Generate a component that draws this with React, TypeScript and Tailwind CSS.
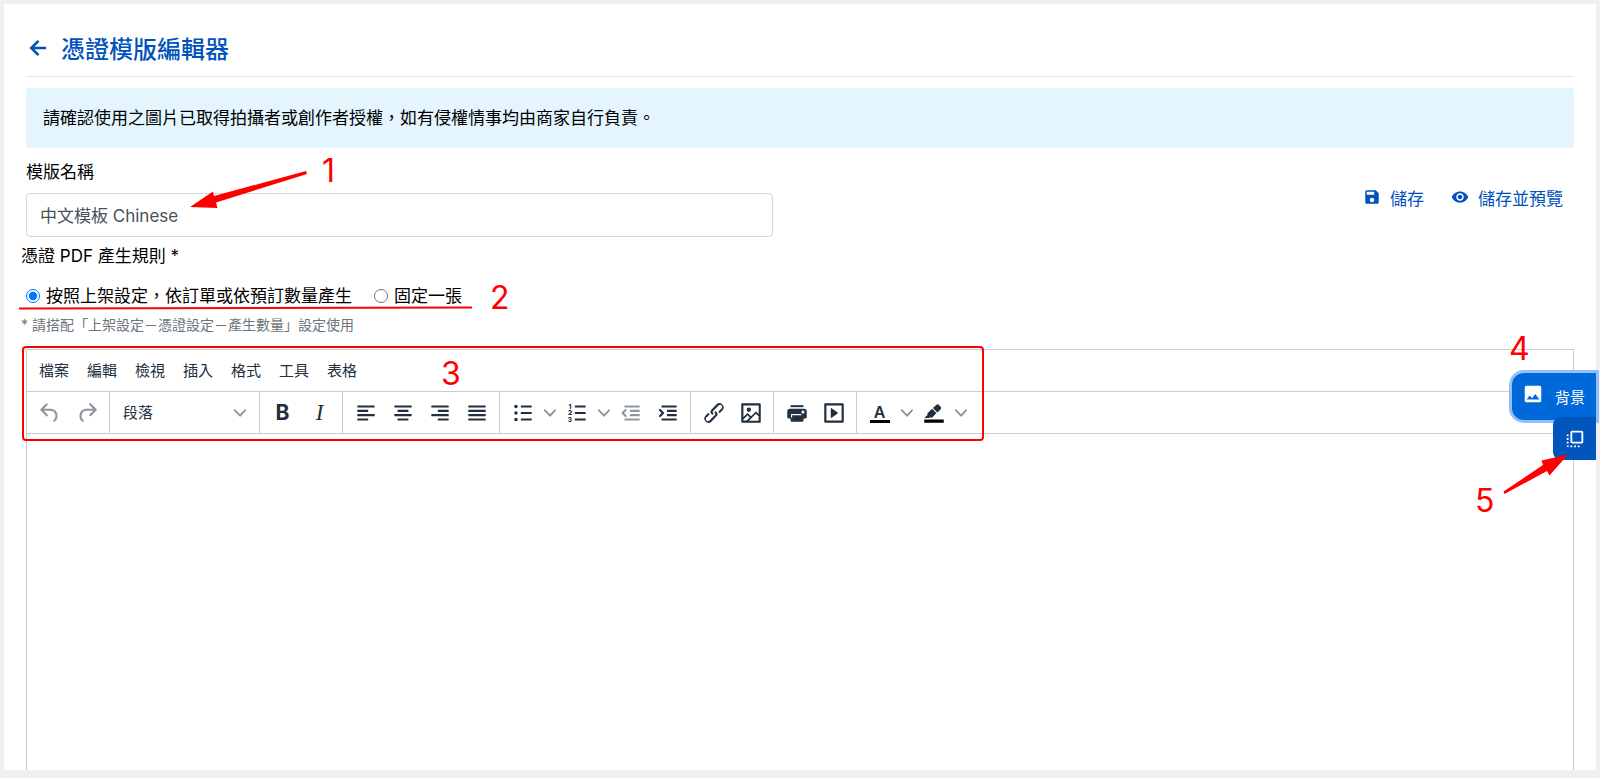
import { useState } from "react";
import type { ReactNode } from "react";
import { MdFlipToFront, MdImage, MdRemoveRedEye, MdSave } from "react-icons/md";

const MENUS = ["檔案", "編輯", "檢視", "插入", "格式", "工具", "表格"];

function Icon({ children }: { children: ReactNode }) {
  return (
    <svg className="w-[26px] h-[26px]" viewBox="0 0 24 24" fill="currentColor">
      {children}
    </svg>
  );
}

function Chevron() {
  return (
    <svg className="w-3 h-3 text-[#8b929c]" viewBox="0 0 10 10" fill="currentColor">
      <path d="M8.7 2.2c.3-.3.8-.3 1 0 .4.4.4.9 0 1.2L5.7 7.8c-.3.3-.9.3-1.2 0L.2 3.4a.8.8 0 0 1 0-1.2c.3-.3.8-.3 1.1 0L5 6l3.7-3.8Z" />
    </svg>
  );
}

interface ToolButtonProps {
  title: string;
  disabled?: boolean;
  children: ReactNode;
}

function ToolButton({ title, disabled, children }: ToolButtonProps) {
  return (
    <button
      type="button"
      title={title}
      disabled={disabled}
      className="w-[37px] h-9 flex items-center justify-center disabled:text-[#8f96a0]"
    >
      {children}
    </button>
  );
}

function SplitButton({ title, children }: ToolButtonProps) {
  return (
    <div className="flex">
      <ToolButton title={title}>{children}</ToolButton>
      <button
        type="button"
        title={`${title}選單`}
        className="w-[17px] h-9 flex items-center justify-center"
      >
        <Chevron />
      </button>
    </div>
  );
}

function ToolGroup({ children }: { children: ReactNode }) {
  return (
    <div className="h-[41px] flex items-center px-1 border-r border-[#cccccc] last:border-r-0">
      {children}
    </div>
  );
}

function Toolbar() {
  return (
    <div className="flex border-b border-[#cccccc]">
      <ToolGroup>
        <ToolButton title="復原" disabled>
          <Icon>
            <path d="M6.4 8H12c3.7 0 6.2 2 6.8 5.1.6 2.7-.4 5.6-2.3 6.8a1 1 0 0 1-1-1.8c1.1-.6 1.8-2.7 1.4-4.6-.5-2.1-2.1-3.5-4.9-3.5H6.4l3.3 3.3a1 1 0 1 1-1.4 1.4l-5-5a1 1 0 0 1 0-1.4l5-5a1 1 0 0 1 1.4 1.4L6.4 8Z" />
          </Icon>
        </ToolButton>
        <ToolButton title="重做" disabled>
          <Icon>
            <path d="M17.6 10H12c-2.8 0-4.4 1.4-4.9 3.5-.4 2 .3 4 1.4 4.6a1 1 0 1 1-1 1.8c-2-1.2-2.9-4.1-2.3-6.8.6-3 3-5.1 6.8-5.1h5.6l-3.3-3.3a1 1 0 1 1 1.4-1.4l5 5a1 1 0 0 1 0 1.4l-5 5a1 1 0 0 1-1.4-1.4l3.3-3.3Z" />
          </Icon>
        </ToolButton>
      </ToolGroup>
      <ToolGroup>
        <button
          type="button"
          className="w-[141px] h-9 px-[9px] flex items-center justify-between text-[15px]"
        >
          段落
          <Chevron />
        </button>
      </ToolGroup>
      <ToolGroup>
        <ToolButton title="粗體">
          <span className="text-[21px] leading-6 font-bold">B</span>
        </ToolButton>
        <ToolButton title="斜體">
          <span className="font-['Liberation_Serif',serif] italic text-[23px] leading-6">
            I
          </span>
        </ToolButton>
      </ToolGroup>
      <ToolGroup>
        <ToolButton title="靠左對齊">
          <Icon>
            <path d="M4 5h16v2H4zM4 9h10v2H4zM4 13h16v2H4zM4 17h10v2H4z" />
          </Icon>
        </ToolButton>
        <ToolButton title="置中對齊">
          <Icon>
            <path d="M4 5h16v2H4zM7 9h10v2H7zM4 13h16v2H4zM7 17h10v2H7z" />
          </Icon>
        </ToolButton>
        <ToolButton title="靠右對齊">
          <Icon>
            <path d="M4 5h16v2H4zM10 9h10v2H10zM4 13h16v2H4zM10 17h10v2H10z" />
          </Icon>
        </ToolButton>
        <ToolButton title="左右對齊">
          <Icon>
            <path d="M4 5h16v2H4zM4 9h16v2H4zM4 13h16v2H4zM4 17h16v2H4z" />
          </Icon>
        </ToolButton>
      </ToolGroup>
      <ToolGroup>
        <SplitButton title="項目符號">
          <Icon>
            <path d="M10 5h10v2H10zM10 11h10v2H10zM10 17h10v2H10z" />
            <circle cx="5.500" cy="6" r="1.600" />
            <circle cx="5.500" cy="12" r="1.600" />
            <circle cx="5.500" cy="18" r="1.600" />
          </Icon>
        </SplitButton>
        <SplitButton title="編號">
          <Icon>
            <path d="M10 5h10v2H10zM10 11h10v2H10zM10 17h10v2H10z" />
            <g fontSize="6" fontWeight="800" textAnchor="middle">
              <text x="5.500" y="8">1</text>
              <text x="5.500" y="14">2</text>
              <text x="5.500" y="20">3</text>
            </g>
          </Icon>
        </SplitButton>
        <ToolButton title="減少縮排" disabled>
          <Icon>
            <path d="M6 5h14v2H6zM11 9h9v2h-9zM11 13h9v2h-9zM6 17h14v2H6z" />
            <path
              d="M7 9.2 4.2 12 7 14.8"
              fill="none"
              stroke="currentColor"
              strokeWidth="2"
              strokeLinecap="round"
              strokeLinejoin="round"
            />
          </Icon>
        </ToolButton>
        <ToolButton title="增加縮排">
          <Icon>
            <path d="M6 5h14v2H6zM11 9h9v2h-9zM11 13h9v2h-9zM6 17h14v2H6z" />
            <path
              d="M4.600 9.200 7.400 12l-2.800 2.800"
              fill="none"
              stroke="currentColor"
              strokeWidth="2"
              strokeLinecap="round"
              strokeLinejoin="round"
            />
          </Icon>
        </ToolButton>
      </ToolGroup>
      <ToolGroup>
        <ToolButton title="連結">
          <Icon>
            <path d="M6.2 12.3a1 1 0 0 1 1.4 1.4l-2 2a2 2 0 1 0 2.6 2.8l4.8-4.8a1 1 0 0 0 0-1.4 1 1 0 1 1 1.4-1.3 2.9 2.9 0 0 1 0 4L9.6 20a3.9 3.9 0 0 1-5.5-5.5l2-2Zm11.6-.6a1 1 0 0 1-1.4-1.4l2-2a2 2 0 1 0-2.6-2.8L11 10.3a1 1 0 0 0 0 1.4A1 1 0 1 1 9.6 13a2.9 2.9 0 0 1 0-4L14.4 4a3.9 3.9 0 0 1 5.5 5.5l-2 2Z" />
          </Icon>
        </ToolButton>
        <ToolButton title="圖片">
          <Icon>
            <path d="m5 15.7 3.3-3.2c.3-.3.7-.3 1 0L12 15l4.1-4c.3-.4.8-.4 1 0l2 1.9V5H5v10.7ZM5 18V19h3l2.8-2.9-2-2L5 17.9Zm14-3-2.5-2.4-6.4 6.5H19v-4ZM4 3h16c.6 0 1 .4 1 1v16c0 .6-.4 1-1 1H4a1 1 0 0 1-1-1V4c0-.6.4-1 1-1Zm6 8a2 2 0 1 0 0-4 2 2 0 0 0 0 4Z" />
          </Icon>
        </ToolButton>
      </ToolGroup>
      <ToolGroup>
        <ToolButton title="列印">
          <Icon>
            <path d="M6 4.800h12v1.800H6z" />
            <path
              fillRule="evenodd"
              d="M18.500 8h-13A2.500 2.500 0 0 0 3 10.500V16a1 1 0 0 0 1 1h2v2a1 1 0 0 0 1 1h10a1 1 0 0 0 1-1v-2h2a1 1 0 0 0 1-1v-5.500A2.500 2.500 0 0 0 18.500 8ZM17.500 9.600a1.400 1.400 0 1 1 0 2.800 1.400 1.400 0 0 1 0-2.800ZM6.500 13h9.500v1.100H7.500v2h-1Z"
            />
          </Icon>
        </ToolButton>
        <ToolButton title="媒體">
          <Icon>
            <path d="M4 3h16c.6 0 1 .4 1 1v16c0 .6-.4 1-1 1H4a1 1 0 0 1-1-1V4c0-.6.4-1 1-1Zm1 2v14h14V5H5Zm4.8 2.6 5.6 4a.5.5 0 0 1 0 .8l-5.6 4A.5.5 0 0 1 9 16V8a.5.5 0 0 1 .8-.4Z" />
          </Icon>
        </ToolButton>
      </ToolGroup>
      <ToolGroup>
        <SplitButton title="文字顏色">
          <span className="w-5 pt-px flex flex-col items-center">
            <span className="text-base leading-4 font-semibold">A</span>
            <span className="w-full h-[3px] bg-black" />
          </span>
        </SplitButton>
        <SplitButton title="背景顏色">
          <Icon>
            <path d="M3 18h18v3H3z" fill="#000" />
            <path d="M7.700 16.700H3l3.300-3.300-.7-.8L10.200 8l4 4.100-4 4.200c-.2.2-.6.2-.8 0l-.6-.7-1.100 1.100Zm5-7.500L11 7.400l3-2.900a2 2 0 0 1 2.600 0L18 6c.7.7.7 2 0 2.700l-2.900 2.900-1.800-1.800-.6-.6Z" />
          </Icon>
        </SplitButton>
      </ToolGroup>
    </div>
  );
}

function Annotations() {
  return (
    <div className="absolute inset-0 pointer-events-none text-[32px] leading-8 text-[#ff0000]">
      <span className="absolute left-[322px] top-[155px]">1</span>
      <svg className="absolute left-[188px] top-[168px] w-32 h-12" viewBox="188 168 128 48" fill="#f00">
        <path d="M190 207 213 191.500 214 196 306 171 307 174 216 202.500 217.500 208Z" />
      </svg>

      <svg className="absolute left-[18px] top-[306px] w-[456px] h-1" viewBox="0 0 456 4">
        <path d="M1 2.600 454 1.400" stroke="#f00" strokeWidth="2" />
      </svg>
      <span className="absolute left-[490px] top-[282px]">2</span>

      <div className="absolute left-[22px] top-[346px] w-[962px] h-[95px] border-2 border-[#ff0000] rounded" />
      <span className="absolute left-[441px] top-[358px]">3</span>

      <span className="absolute left-[1509px] top-[333px]">4</span>
      <span className="absolute left-[1475px] top-[485px]">5</span>
      <svg className="absolute left-[1500px] top-[450px] w-[72px] h-12" viewBox="1500 450 72 48" fill="#f00">
        <path d="M1568 454.500 1549.500 475.500 1547 471 1504.500 494 1503.500 491.500 1543 465 1541.500 460.500Z" />
      </svg>
    </div>
  );
}

export default function App() {
  const [name, setName] = useState("中文模板 Chinese");
  const [rule, setRule] = useState("order");

  return (
    <div className="relative min-h-screen flex flex-col overflow-hidden bg-[#f0f0f2] px-1 pt-1 pb-2 font-[Inter,'Noto_Sans_CJK_TC',sans-serif] text-[17px] leading-6 text-black">
      <main className="grow flex flex-col bg-white px-[22px]">
        <header className="h-[73px] pt-5 flex items-center gap-[11px] border-b border-[#e4e6e8] text-[#0052bd]">
          <a href="#back" aria-label="返回" className="pb-1">
            <svg
              className="w-6 h-6"
              viewBox="0 0 24 24"
              fill="none"
              stroke="currentColor"
              strokeWidth="2.600"
            >
              <path d="M20 12H6M12.500 4.800 5.300 12l7.200 7.200" />
            </svg>
          </a>
          <h1 className="text-2xl font-medium">憑證模版編輯器</h1>
        </header>

        <div className="mt-[11px] px-[17px] py-[18px] rounded bg-[#e4f5fe]">
          請確認使用之圖片已取得拍攝者或創作者授權，如有侵權情事均由商家自行負責。
        </div>

        <div className="mt-3 flex items-center justify-between">
          <div className="w-[747px] flex flex-col gap-[9px]">
            <label htmlFor="template-name">模版名稱</label>
            <input
              id="template-name"
              value={name}
              onChange={(e) => setName(e.target.value)}
              className="h-11 px-[13px] pb-0.5 border border-[#d0d7de] rounded text-[#495057]"
            />
          </div>
          <div className="flex items-center gap-[27px] pr-[11px] text-[#0052bd]">
            <button type="button" className="flex items-center gap-[9px]">
              <MdSave className="w-[18px] h-[18px] mb-1" />
              儲存
            </button>
            <button type="button" className="flex items-center gap-[9px]">
              <MdRemoveRedEye className="w-[18px] h-[18px] mb-1" />
              儲存並預覽
            </button>
          </div>
        </div>

        <fieldset className="-ml-[5px] mt-[7px]">
          <legend>憑證 PDF 產生規則 *</legend>
          <div className="mt-4 ml-[5px] flex items-center gap-[22px]">
            <label className="flex items-center gap-[6px]">
              <input
                type="radio"
                name="rule"
                checked={rule === "order"}
                onChange={() => setRule("order")}
                className="w-[14px] h-[14px] accent-[#0075ff]"
              />
              按照上架設定，依訂單或依預訂數量產生
            </label>
            <label className="flex items-center gap-[6px]">
              <input
                type="radio"
                name="rule"
                checked={rule === "single"}
                onChange={() => setRule("single")}
                className="w-[14px] h-[14px] accent-[#0075ff]"
              />
              固定一張
            </label>
          </div>
          <p className="mt-[7px] text-sm leading-5 text-[#6c757d]">
            * 請搭配「上架設定－憑證設定－產生數量」設定使用
          </p>
        </fieldset>

        <section className="mt-[14px] grow flex flex-col border border-b-0 border-[#cccccc] text-[#222f3e]">
          <nav className="h-[42px] px-3 flex items-center gap-[18px] border-b border-[#cccccc] text-[15px]">
            {MENUS.map((menu) => (
              <button key={menu} type="button">
                {menu}
              </button>
            ))}
          </nav>
          <Toolbar />
          <div className="grow" contentEditable suppressContentEditableWarning />
        </section>
      </main>

      <aside className="absolute right-1 top-[373px] flex flex-col items-end text-white">
        <button
          type="button"
          className="h-[47px] pt-0.5 pl-[10px] pr-[11px] flex items-center gap-[11px] rounded-l-xl bg-[#0069d9] ring-3 ring-[#93bff7] text-[15px]"
        >
          <MdImage className="w-[22px] h-[22px] mb-2" />
          背景
        </button>
        <button
          type="button"
          title="移到最前"
          className="relative -mt-[3px] w-[43px] h-[43px] flex items-center justify-center rounded-l-lg bg-[#0056bd]"
        >
          <MdFlipToFront className="w-[22px] h-[22px]" />
        </button>
      </aside>

      <Annotations />
    </div>
  );
}
